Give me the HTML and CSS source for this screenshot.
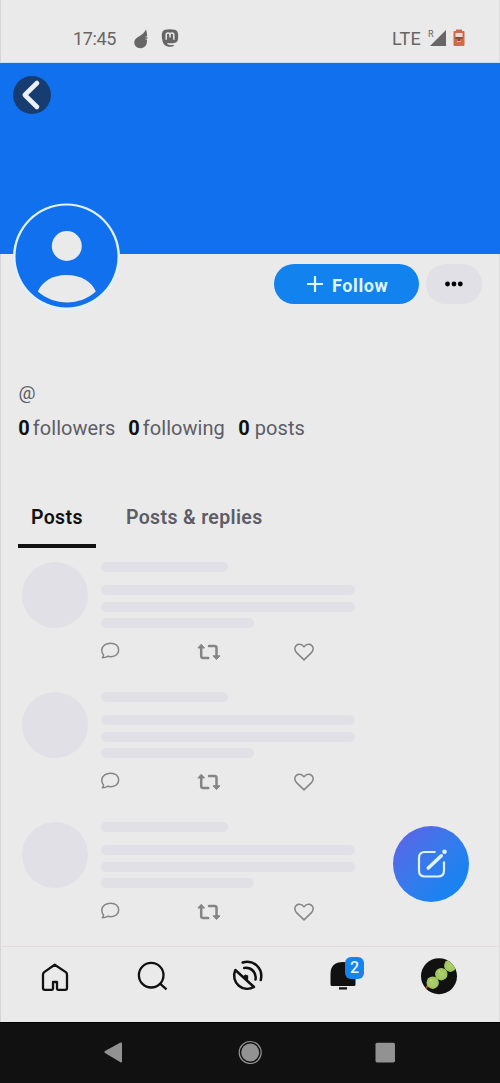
FILE: index.html
```html
<!DOCTYPE html>
<html lang="en">
<head>
<meta charset="utf-8">
<title>Profile</title>
<link rel="stylesheet" href="styles.css">
</head>
<body>
<svg class="defs" width="0" height="0">
  <symbol id="comment" viewBox="0 0 20 18"><path d="M2.500 12.800C-.2 9.800.4 5.200 3.700 2.800 7 .6 12.500.6 15.500 3c2.900 2.500 2.800 7.300.1 9.700-2.300 2-5.600 2.300-9 1.500-1.300 1.100-3.200 1.600-5.300 1.600.8-.8 1.300-1.800 1.200-3z" fill="none" stroke="currentColor" stroke-width="1.500" stroke-linejoin="round"/></symbol>
  <symbol id="repost" viewBox="0 0 24 18"><path d="M4.200 4v9q0 2 2 2h5M12 3h5.500q2 0 2 2v9" fill="none" stroke="currentColor" stroke-width="2.500" stroke-linecap="round"/><path d="M4.200 1.300 7.500 5H.9zM19.500 16.500 16 12.800h7z" fill="currentColor" stroke="currentColor" stroke-linejoin="round"/></symbol>
  <symbol id="heart" viewBox="0 0 20 18"><path d="M10 16.900 2.300 9.400C-.6 5.800 1.400 1.500 5 1.200c2.300-.2 3.900 1 5 2.600 1.100-1.600 2.700-2.800 5-2.600 3.600.3 5.600 4.600 2.700 8.200z" fill="none" stroke="currentColor" stroke-width="1.500" stroke-linejoin="round"/></symbol>
</svg>
<div class="screen">
  <header class="status">
    <span class="clock">17:45</span>
    <svg class="drop" width="14" height="20" viewBox="0 0 14 20"><path d="M12 .5c.8 2.800 1.300 5.200 1.100 7H11.500v.7h2l-.2 1.500h-1.800v.8h1.500c.5 5-2 8.700-6.500 8.700C2.800 19.200.3 16.900.3 13.500c0-3 1.800-4.500 4.600-6C8 5.700 10.500 3.500 12 .5z" fill="#666"/></svg>
    <svg class="mastodon" width="18" height="18" viewBox="0 0 18 18"><path d="M4 .8Q9-.4 14 .8q2.700.8 3 3.700.4 3.500-.2 6.500-.6 2.500-4 3-3 .5-6.800 0 .3 1.900 3 2.100 1.800.1 3.700-.4l.1 1.400q-3.200 1.200-7 .1Q2.500 16.200 1.500 12 .5 8 .9 4.500 1.300 1.500 4 .8z" fill="#666"/><path d="M5.200 10.800V6q0-2.100 1.900-2.100T9 6v2.500V6q0-2.100 1.900-2.100T12.800 6v4.800" fill="none" stroke="#eaeaea" stroke-width="1.500"/></svg>
    <span class="network">LTE</span>
    <span class="roaming">R</span>
    <svg class="signal" width="16" height="16" viewBox="0 0 16 16"><path d="M16 0v16H0z" fill="#666"/></svg>
    <svg class="battery" width="12" height="18" viewBox="0 0 12 18"><path d="M3 .5h6v2H3zM1.500 2h9q1 0 1 1v13q0 1-1 1h-9q-1 0-1-1V3q0-1 1-1z" fill="#cc6a4b"/><path d="M2.500 4h7v4h-7z" fill="#eadbd5"/><path d="M2.500 8h7v2h-7zM5 10h2v3H5z" fill="#884b3e"/><path d="M4 12h4v1H4z" fill="#efb39f"/></svg>
  </header>

  <div class="banner">
    <div class="back"><svg width="38" height="38" viewBox="0 0 38 38"><path d="M24 7 11.800 19 24 31" fill="none" stroke="#eaf0f6" stroke-width="4.600" stroke-linecap="round" stroke-linejoin="round"/></svg></div>
  </div>

  <div class="identity">
    <svg class="portrait" width="108" height="108" viewBox="0 0 108 108"><circle cx="53.500" cy="54" r="53.500" fill="#e2f1f7"/><circle cx="53.500" cy="53.500" r="51" fill="#1070ed"/><circle cx="53.800" cy="43" r="15" fill="#eaeaea"/><path d="M24.800 88.500C29 78.500 39.500 72 53.500 72s25.500 6.500 29.300 16.500C75 95.500 65 99.500 54 99.500s-21-4-29.200-11z" fill="#eaeaea"/></svg>
    <div class="follow"><svg width="16" height="16" viewBox="0 0 16 16"><path d="M8 .8v14.400M.8 8h14.400" stroke="#dff5fc" stroke-width="2.200" stroke-linecap="round"/></svg><span>Follow</span></div>
    <div class="more"><svg width="18" height="6" viewBox="0 0 18 6"><circle cx="2.500" cy="3" r="2.400"/><circle cx="9" cy="3" r="2.400"/><circle cx="15.300" cy="3" r="2.400"/></svg></div>
  </div>

  <div class="handle">@</div>
  <div class="stats">
    <span class="stat"><b>0</b><span>followers</span></span>
    <span class="stat"><b>0</b><span>following</span></span>
    <span class="stat posts"><b>0</b><span>posts</span></span>
  </div>

  <nav class="tabs"><span class="tab active">Posts</span><span class="tab">Posts &amp; replies</span></nav>

  <main class="feed">
    <article class="post">
      <div class="face"></div>
      <div class="body"><i class="bar name"></i><i class="bar"></i><i class="bar"></i><i class="bar short"></i>
        <div class="actions"><svg class="comment"><use href="#comment"/></svg><svg class="repost"><use href="#repost"/></svg><svg class="heart"><use href="#heart"/></svg></div></div>
    </article>
    <article class="post">
      <div class="face"></div>
      <div class="body"><i class="bar name"></i><i class="bar"></i><i class="bar"></i><i class="bar short"></i>
        <div class="actions"><svg class="comment"><use href="#comment"/></svg><svg class="repost"><use href="#repost"/></svg><svg class="heart"><use href="#heart"/></svg></div></div>
    </article>
    <article class="post">
      <div class="face"></div>
      <div class="body"><i class="bar name"></i><i class="bar"></i><i class="bar"></i><i class="bar short"></i>
        <div class="actions"><svg class="comment"><use href="#comment"/></svg><svg class="repost"><use href="#repost"/></svg><svg class="heart"><use href="#heart"/></svg></div></div>
    </article>
  </main>

  <div class="compose"><svg width="32" height="32" viewBox="0 0 32 32"><path d="M20.500 4H10Q4 4 4 10v12.500q0 6 6 6h13q6 0 6-6V13.500" fill="none" stroke="#def3fc" stroke-width="2.200"/><path d="M13.300 20 26.300 7.800" stroke="#def3fc" stroke-width="3.600" stroke-linecap="round"/><circle cx="29.500" cy="3.800" r="2.300" fill="#def3fc"/></svg></div>

  <nav class="bottom">
    <svg width="40" height="40" viewBox="0 0 40 40"><path d="M19.700 8.700 9.200 16.100Q8 17.100 8 18.700V32q0 1.800 1.800 1.800h7.200q1 0 1-1V26h4v6.800q0 1 1 1h7.200Q32 33.800 32 32V18.700q0-1.600-1.200-2.600z" fill="none" stroke="#111" stroke-width="2.300" stroke-linejoin="round"/></svg>
    <svg width="40" height="40" viewBox="0 0 40 40"><circle cx="20.200" cy="19.200" r="12.300" fill="none" stroke="#111" stroke-width="2.300"/><path d="m29 27.700 6.500 5.600" stroke="#111" stroke-width="2.300"/></svg>
    <svg width="40" height="40" viewBox="0 0 40 40"><g fill="none" stroke="#111" stroke-width="2.500" stroke-linecap="round" stroke-linejoin="round"><path d="M8.300 14c-2.500 5.500-1 11.800 3.500 15.700 4.200 3.600 10.300 4 15.200 1.300z"/><path d="M15.700 6.500C26 3.200 36.500 11.500 33.800 24"/><path d="M17.200 12c7-1 12.600 4.500 11.300 11.500"/></g><path d="m15.500 21 2.700-2.600 3 1.100v3.500l-1.200 3z" fill="#111"/></svg>
    <div class="alerts"><svg width="40" height="40" viewBox="0 0 40 40"><path d="M7.500 28.500V18Q7.500 6 20 6t12.500 12v10.500q0 1.500-1.500 1.500H9Q7.500 30 7.500 28.500zM16 31.300h8v2.200h-8z" fill="#111"/></svg><span class="badge">2</span></div>
    <svg width="40" height="40" viewBox="0 0 40 40"><defs><clipPath id="round"><circle cx="20" cy="20.200" r="18"/></clipPath><radialGradient id="pea"><stop offset="0" stop-color="#b0cf6b"/><stop offset="1" stop-color="#9dc45d"/></radialGradient></defs><g clip-path="url(#round)"><path d="M0 0h40v40H0z" fill="#111"/><path d="m5 35 5-7" stroke="#a84c18" stroke-width="2"/><g fill="url(#pea)"><circle cx="13.700" cy="26.700" r="6.200"/><circle cx="22.300" cy="18.200" r="6.200"/><circle cx="31.300" cy="9.700" r="6.200"/></g><g fill="#d6e6ad"><circle cx="11.800" cy="24" r=".8"/><circle cx="20.300" cy="15.300" r=".8"/></g></g></svg>
  </nav>

  <footer class="system">
    <svg width="24" height="24" viewBox="0 0 24 24"><path d="M3 11 18.500 2.500Q20 2 20 3.500v18q0 1.500-1.500.7L3 13q-1.500-1 0-2z" fill="#929292"/></svg>
    <svg width="24" height="24" viewBox="0 0 24 24"><circle cx="12.200" cy="12.500" r="11" fill="none" stroke="#929292" stroke-width="1.200"/><circle cx="12.200" cy="12.500" r="9" fill="#929292"/></svg>
    <svg width="24" height="24" viewBox="0 0 24 24"><rect x="2.500" y="2.700" width="19.500" height="19.700" rx="1.600" fill="#929292"/></svg>
  </footer>
</div>
</body>
</html>
```

FILE: styles.css
```css
* { box-sizing: border-box; }
body { margin: 0; background: #eaeaea; font-family: Roboto, "Liberation Sans", sans-serif; }
svg { display: block; flex: none; }
.defs { position: absolute; }
.screen { width: 500px; height: 1083px; display: flex; flex-direction: column; position: relative; overflow: hidden; background: #eaeaea; box-shadow: inset 1px 0 #d6d6d6, inset -1px 0 #dcdcdc; }
.screen > * { flex: none; }

.status { height: 63px; display: flex; align-items: flex-start; color: #666; font-size: 18px; line-height: 20px; padding: 29px 0 0 73px; border-bottom: 1px solid #c7e0f0; }
.clock { width: 61px; letter-spacing: -.35px; }
.mastodon { margin: 0 0 0 13px; }
.network { margin-left: 213px; width: 36px; white-space: nowrap; letter-spacing: .2px; }
.roaming { width: 2px; font-size: 9px; line-height: 10px; }
.signal { margin: 1px 0 0 0; }
.battery { margin: 0 0 0 7px; }

.banner { height: 191px; background: #1070ed; padding: 13px; }
.back { width: 38px; height: 38px; border-radius: 50%; background: #173d70; }

.identity { height: 125px; display: flex; align-items: flex-start; padding-left: 13px; }
.portrait { margin-top: -51px; }
.follow { width: 145px; height: 40px; margin: 10px 0 0 153px; border-radius: 20px; background: #1283ee; color: #dff5fc; display: flex; align-items: center; gap: 9px; padding-left: 33px; font-size: 18px; font-weight: 700; letter-spacing: .6px; }
.follow span { margin-top: 3px; }
.more { width: 56px; height: 40px; margin: 10px 0 0 7px; border-radius: 20px; background: #e1e0e6; display: grid; place-items: center; }

.handle { height: 35px; padding-left: 18.500px; font-size: 19px; line-height: 28px; color: #5c5d66; }
.stats { height: 72px; display: flex; padding-left: 18.300px; font-size: 20px; line-height: 29px; color: #5c5d66; letter-spacing: .05px; }
.stat { width: 110px; display: flex; gap: 3px; }
.stat.posts { gap: 5px; }
.stat b { color: #111; letter-spacing: 0; }

.tabs { height: 62px; display: flex; padding-left: 18px; font-size: 19.500px; font-weight: 600; line-height: 63px; color: #5c5d66; letter-spacing: .35px; }
.tab { height: 62px; }
.tab.active { width: 78px; margin-right: 30px; padding-left: 13px; color: #111; border-bottom: 4px solid #111; }

.feed { height: 398px; padding: 14px 22px 0; display: grid; grid-template-rows: 130px 130px 122px; }
.post { display: flex; gap: 13px; }
.face { width: 66px; height: 66px; border-radius: 50%; background: #e1e0e6; }
.body { display: flex; flex-direction: column; }
.bar { width: 254px; height: 10px; margin-bottom: 6.500px; border-radius: 5px; background: #e1e0e6; }
.bar.name { width: 127px; margin: .4px 0 13px; }
.bar.short { width: 153px; margin-bottom: 14px; }
.actions { display: flex; color: #858585; }
.comment { width: 20px; height: 18px; }
.repost { width: 24px; height: 18px; margin: 1px 0 0 76px; }
.heart { width: 20px; height: 18px; margin: 1px 0 0 73px; }

.compose { position: absolute; left: 393px; top: 826px; width: 76px; height: 76px; border-radius: 50%; background: linear-gradient(135deg, #5867e6 12%, #367aec 48%, #1584f2 85%); display: grid; place-items: center; }
.bottom { height: 76px; border-top: 1px solid #e5dada; display: grid; grid-template-columns: repeat(5, 96px); padding: 9px 0 0 7px; justify-items: center; }
.alerts { position: relative; }
.badge { position: absolute; left: 22px; top: 1px; width: 19px; height: 22px; border-radius: 6px; background: #1584ee; color: #e6f6fc; text-align: center; font-size: 16px; font-weight: 500; line-height: 22px; }
.system { height: 61px; background: #111; display: flex; justify-content: space-between; padding: 17px 103px 0 102px; border-top: 1px solid #000; }
```
